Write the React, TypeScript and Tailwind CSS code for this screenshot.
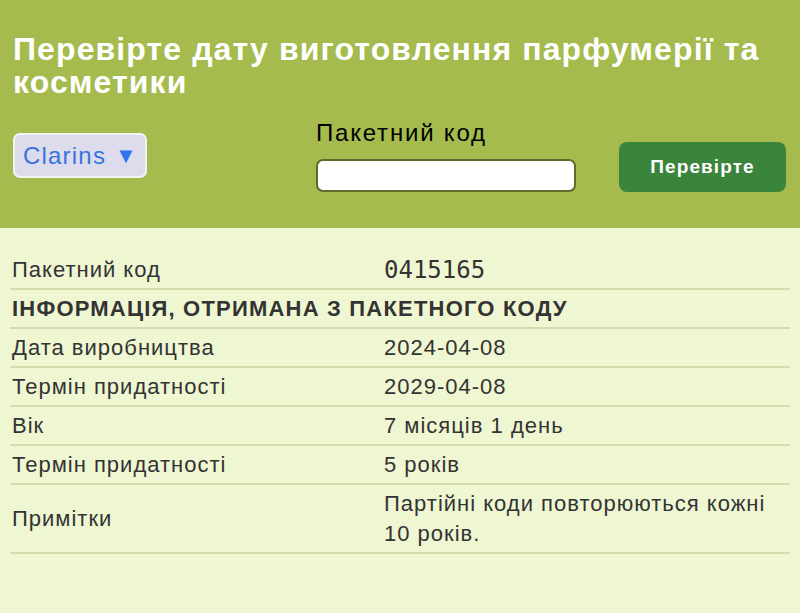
import React from "react";

const rows: { label: string; value: string }[] = [
  { label: "Дата виробництва", value: "2024-04-08" },
  { label: "Термін придатності", value: "2029-04-08" },
  { label: "Вік", value: "7 місяців 1 день" },
  { label: "Термін придатності", value: "5 років" },
  { label: "Примітки", value: "Партійні коди повторюються кожні 10 років." },
];

export default function App() {
  return (
    <div className="min-h-[613px] bg-[#eff6d2] font-['Liberation_Sans',Arial,sans-serif]">
      <header className="bg-[#a5bb4d] px-[13px] pt-[33px] pb-[36px]">
        <h1 className="text-[32px] font-bold leading-[33px] tracking-[1.1px] text-white">
          Перевірте дату виготовлення парфумерії та косметики
        </h1>
        <div className="mt-[20px] flex items-start">
          <button className="mt-[14px] flex h-[45px] w-[134px] items-center gap-[9px] rounded-[7px] border-2 border-[#f4f4f8] bg-[#dcdcec] pl-[8px] text-[24px] tracking-[1.2px] text-[#3a72df]">
            Clarins
            <span className="text-[22px] text-[#2f74f0]">▼</span>
          </button>
          <div className="ml-[169px] flex flex-col">
            <label className="text-[24px] leading-[28px] tracking-[1.8px] text-black">Пакетний код</label>
            <input className="mt-[12px] h-[33px] w-[260px] rounded-[7px] border-2 border-[#5f6b2d] bg-white" />
          </div>
          <button className="ml-[43px] mt-[23px] h-[50px] w-[167px] rounded-[8px] bg-[#3a843c] text-[19px] font-bold tracking-[1.1px] text-white">
            Перевірте
          </button>
        </div>
      </header>

      <main className="px-[10px] pt-[23px]">
        <div className="text-[22px] leading-[30px] tracking-[1px] text-[#333]">
          <div className="flex border-b-2 border-[#d2dcae] pt-[4px] pb-[3px]">
            <div className="w-[374px] pl-[2px]">Пакетний код</div>
            <div className="font-['DejaVu_Sans_Mono',monospace] text-[24px] tracking-normal">0415165</div>
          </div>
          <div className="border-b-2 border-[#d2dcae] pt-[4px] pb-[3px] pl-[2px] font-bold tracking-[1.2px]">
            ІНФОРМАЦІЯ, ОТРИМАНА З ПАКЕТНОГО КОДУ
          </div>
          {rows.map((r, i) => (
            <div key={i} className="flex items-center border-b-2 border-[#d2dcae] pt-[4px] pb-[3px]">
              <div className="w-[374px] pl-[2px]">{r.label}</div>
              <div className="w-[396px]">{r.value}</div>
            </div>
          ))}
        </div>
      </main>
    </div>
  );
}
